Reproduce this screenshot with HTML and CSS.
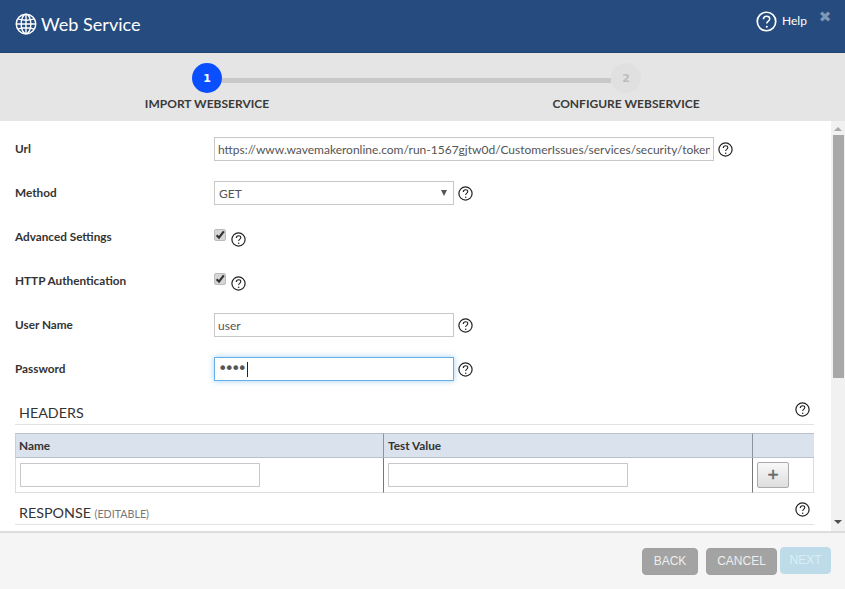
FILE: index.html
```html
<!DOCTYPE html>
<html lang="en">
<head>
<meta charset="utf-8">
<title>Web Service</title>
<link rel="stylesheet" href="styles.css">
</head>
<body>
<svg class="defs" width="0" height="0" aria-hidden="true">
  <symbol id="q" viewBox="0 0 15 15">
    <circle cx="7.5" cy="7.5" r="6.6" fill="none" stroke="currentColor" stroke-width="1.2"/>
    <path d="M5.3 5.9c0-1.4 1-2.2 2.3-2.2 1.3 0 2.2.8 2.2 1.9 0 1-.6 1.4-1.2 1.8-.6.4-.9.8-.9 1.6" fill="none" stroke="currentColor" stroke-width="1.1"/>
    <circle cx="7.7" cy="11.2" r=".75" fill="currentColor"/>
  </symbol>
  <symbol id="tick" viewBox="0 0 12 12">
    <path d="M2.6 6.2 5 8.6 9.8 2.4" fill="none" stroke="currentColor" stroke-width="2.2"/>
  </symbol>
</svg>
<div class="dialog">
  <header class="top">
    <div class="title">
      <svg class="globe" viewBox="0 0 22 22" fill="none" stroke="#fff" stroke-width="1.4">
        <circle cx="11" cy="11" r="9.8"/>
        <ellipse cx="11" cy="11" rx="4.8" ry="9.8"/>
        <path d="M11 1.2v19.6M1.2 11h19.6M2.8 5.8c4.6 1.6 11.8 1.6 16.4 0M2.8 16.2c4.6-1.6 11.8-1.6 16.4 0"/>
      </svg>
      <span>Web Service</span>
    </div>
    <div class="top-actions">
      <svg class="help-icon"><use href="#q"/></svg>
      <span class="help-text">Help</span>
      <span class="close">✖</span>
    </div>
  </header>

  <section class="stepper">
    <div class="track">
      <span class="dot dot-on">1</span>
      <span class="bar"></span>
      <span class="dot dot-off">2</span>
    </div>
    <div class="step-labels">
      <span>IMPORT WEBSERVICE</span>
      <span>CONFIGURE WEBSERVICE</span>
    </div>
  </section>

  <main class="middle">
    <div class="content">
      <div class="row">
        <label class="lbl">Url</label>
        <input class="field field-url" type="text" readonly value="https://www.wavemakeronline.com/run-1567gjtw0d/CustomerIssues/services/security/token">
        <svg class="q"><use href="#q"/></svg>
      </div>
      <div class="row">
        <label class="lbl">Method</label>
        <div class="field field-select"><span>GET</span><i class="caret"></i></div>
        <svg class="q"><use href="#q"/></svg>
      </div>
      <div class="row">
        <label class="lbl">Advanced Settings</label>
        <span class="check"><svg class="tick"><use href="#tick"/></svg></span>
        <svg class="q q-check"><use href="#q"/></svg>
      </div>
      <div class="row">
        <label class="lbl">HTTP Authentication</label>
        <span class="check"><svg class="tick"><use href="#tick"/></svg></span>
        <svg class="q q-check"><use href="#q"/></svg>
      </div>
      <div class="row">
        <label class="lbl">User Name</label>
        <input class="field field-user" type="text" readonly value="user">
        <svg class="q"><use href="#q"/></svg>
      </div>
      <div class="row">
        <label class="lbl">Password</label>
        <div class="field field-focus"><span class="dots">••••</span><i class="cursor"></i></div>
        <svg class="q"><use href="#q"/></svg>
      </div>

      <div class="section section-headers">
        <h3>HEADERS</h3>
        <svg class="q"><use href="#q"/></svg>
      </div>
      <div class="table">
        <div class="th">Name</div>
        <div class="th">Test Value</div>
        <div class="th"></div>
        <div class="td"><div class="cell-input"></div></div>
        <div class="td"><div class="cell-input"></div></div>
        <div class="td td-last"><button class="plus" type="button">+</button></div>
      </div>
      <div class="section section-response">
        <h3>RESPONSE <small>(EDITABLE)</small></h3>
        <svg class="q"><use href="#q"/></svg>
      </div>
    </div>
    <div class="scrollbar">
      <i class="arrow arrow-up"></i>
      <div class="thumb"></div>
      <i class="arrow arrow-down"></i>
    </div>
  </main>

  <footer class="bottom">
    <button class="btn" type="button">BACK</button>
    <button class="btn btn-cancel" type="button">CANCEL</button>
    <button class="btn btn-next" type="button">NEXT</button>
  </footer>
</div>
</body>
</html>
```
FILE: styles.css
```css
* { box-sizing: border-box; }
html, body { margin: 0; padding: 0; }
body { width: 845px; height: 589px; overflow: hidden; font-family: Lato, "Liberation Sans", sans-serif; background: #fff; }
.defs { position: absolute; }
.dialog { display: flex; flex-direction: column; height: 589px; }

.top { height: 53px; flex: none; background: #264b7e; color: #fff; display: flex; justify-content: space-between; align-items: flex-start; border-bottom: 1px solid #234672; }
.title { display: flex; align-items: center; gap: 4.5px; padding: 13px 0 0 14.5px; font-size: 18.1px; line-height: 22px; }
.globe { width: 22px; height: 22px; display: block; }
.top-actions { display: flex; align-items: center; padding: 11px 13px 0 0; }
.help-icon { width: 21px; height: 21px; color: #fff; }
.help-text { font-size: 12px; margin: -2px 0 0 5px; width: 36px; }
.close { font-size: 15px; color: #7e96b6; margin-top: -10px; width: 14px; text-align: center; font-family: "DejaVu Sans", sans-serif; }

.stepper { height: 68px; flex: none; background: #e5e5e5; padding-top: 10px; }
.track { display: flex; align-items: center; padding: 0 204px 0 192px; height: 30px; }
.dot { width: 30px; height: 30px; border-radius: 50%; flex: none; display: flex; align-items: center; justify-content: center; font-family: "DejaVu Sans", sans-serif; font-size: 11px; font-weight: 700; }
.dot-on { background: #0a4fff; color: #fff; }
.dot-off { background: #e0e0e0; color: #bdbdbd; }
.bar { flex: 1; height: 5px; background: #c8c8c8; margin-top: 5px; }
.step-labels { display: grid; grid-template-columns: 414px 424px; margin-top: 3px; font-size: 12px; font-weight: 700; color: #3a3a3a; text-align: center; line-height: 15px; }

.middle { flex: 1; display: flex; min-height: 0; overflow: hidden; }
.content { flex: 1; padding: 5px 17px 0 15px; overflow: hidden; }
.row { display: flex; height: 44px; align-items: flex-start; padding-top: 11px; }
.lbl { width: 199px; flex: none; font-size: 11.75px; font-weight: 700; color: #333; line-height: 22px; margin-top: 1px; }
.field { width: 240px; height: 24px; margin: 0; border: 1px solid #c8c8c8; border-radius: 0; outline: 0; background: #fff; padding: 1px 4px 0 4px; font-family: Lato, "Liberation Sans", sans-serif; font-size: 12px; line-height: 22px; color: #555; white-space: nowrap; overflow: hidden; display: flex; align-items: center; }
.field-url { width: 500px; display: block; padding: 1px 3px 0; }
.field-user { display: block; padding: 1px 3px 0; }
.field-select { justify-content: space-between; padding-right: 6px; }
.caret { width: 0; height: 0; border-left: 3.5px solid transparent; border-right: 3.5px solid transparent; border-top: 6px solid #555; margin-top: -2px; }
.field-focus { border-color: #66afe9; box-shadow: 0 0 6px rgba(102,175,233,.6); padding-top: 0; padding-left: 3px; }
.dots { font-family: "DejaVu Sans", sans-serif; font-size: 16px; letter-spacing: -2.94px; color: #555; }
.cursor { width: 1px; height: 15px; background: #222; margin-left: 3px; }
.q { width: 15px; height: 15px; color: #222; flex: none; margin: 5px 0 0 4px; display: block; }
.q-check { margin: 7px 0 0 5px; }
.check { width: 12px; height: 12px; margin-top: 4px; flex: none; border: 1px solid #bbb; border-radius: 2px; background: #d6d6d6; color: #333; display: block; }
.tick { width: 12px; height: 12px; display: block; margin: -1px 0 0 -1px; }

.section { width: 799px; display: flex; justify-content: space-between; border-bottom: 1px solid #e2e2e2; padding-left: 4px; height: 25px; }
.section-headers { margin-top: 10px; }
.section-response { margin-top: 7px; }
.section h3 { margin: 0; font-size: 14.3px; font-weight: 400; color: #333; line-height: 26px; }
.section small { font-size: 10.7px; color: #777; }
.section .q { margin: 2px 4px 0 0; }

.table { width: 799px; margin-top: 8px; display: grid; grid-template-columns: 369px 369px 61px; }
.th { height: 25px; background: #d9e2ed; border-top: 1px solid #b9c2cc; border-bottom: 1px solid #b9c2cc; border-right: 1px solid #8e949b; font-size: 11.8px; font-weight: 700; color: #333; line-height: 24px; padding-left: 4px; }
.th:first-child { border-left: 1px solid #ccd; padding-left: 3px; }
.th:nth-child(3) { border-right: 0; }
.td { height: 35px; border-bottom: 1px solid #ddd; border-right: 1px solid #777; padding: 5px 0 0 4px; }
.td:nth-child(4) { border-left: 1px solid #ddd; }
.td-last { border-right: 1px solid #ddd; padding-top: 4px; }
.cell-input { width: 240px; height: 24px; border: 1px solid #c8c8c8; }
.plus { width: 32px; height: 26px; padding: 0; border: 1px solid #aaa; border-radius: 2px; background: linear-gradient(#f8f8f8, #dedede); color: #666; font: 400 19px/24px "Liberation Sans", sans-serif; -webkit-text-stroke: .4px #666; display: block; }

.scrollbar { width: 14px; flex: none; background: #f1f1f1; display: flex; flex-direction: column; align-items: center; padding-top: 6px; }
.arrow { width: 0; height: 0; border-left: 4px solid transparent; border-right: 4px solid transparent; flex: none; }
.arrow-up { border-bottom: 4px solid #a8a8a8; }
.thumb { width: 11px; height: 243px; margin-top: 4px; background: #a8a8a8; }
.arrow-down { border-top: 4px solid #505050; margin-top: 142px; }

.bottom { height: 58px; flex: none; background: #f5f5f5; border-top: 2px solid #ddd; display: flex; align-items: flex-start; padding: 15px 0 0 642px; }
.btn { height: 27px; width: 56px; border: 1px solid #a0a0a0; border-radius: 4px; background: #a3a3a3; color: #eee; font: 400 12px/25px "Liberation Sans", sans-serif; padding: 0; }
.btn-cancel { width: 71px; margin-left: 8px; }
.btn-next { width: 51px; margin: -1px 0 0 3px; background: #bddbe9; border-color: #bddbe9; color: #dceef5; }
```
